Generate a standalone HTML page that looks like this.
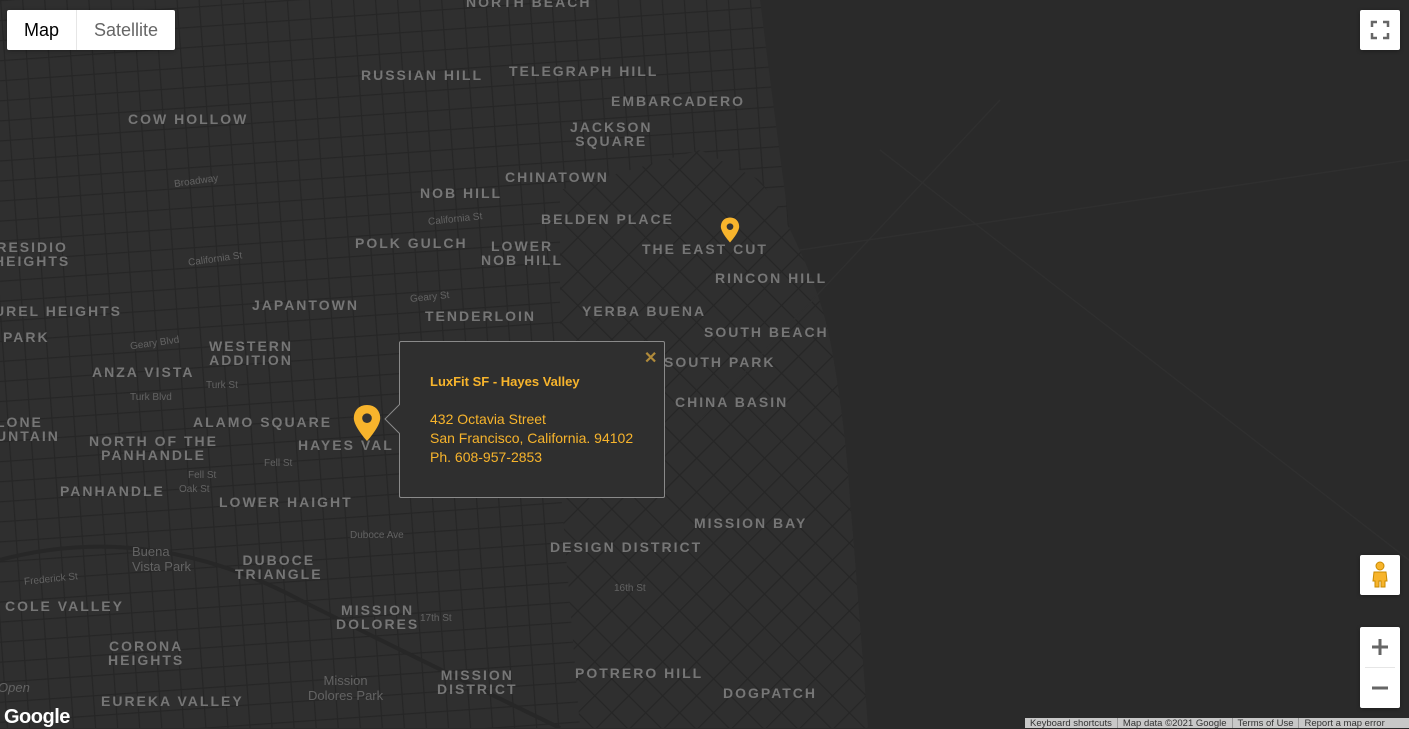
<!DOCTYPE html>
<html><head><meta charset="utf-8"><style>
*{margin:0;padding:0;box-sizing:border-box}
body{width:1409px;height:728px;overflow:hidden;background:#2a2a2a;font-family:"Liberation Sans",sans-serif;position:relative}
.l{position:absolute;color:#767676;font-weight:bold;font-size:14px;letter-spacing:2px;line-height:14px;text-align:center;white-space:nowrap}
.s{position:absolute;color:#636363;font-size:10px;white-space:nowrap}
.btn{position:absolute;background:#fff;border-radius:2px;box-shadow:0 1px 4px rgba(0,0,0,.3)}
</style></head><body>
<svg width="1409" height="728" style="position:absolute;left:0;top:0">
<defs>
<pattern id="g" width="22" height="20" patternUnits="userSpaceOnUse" patternTransform="rotate(-4)">
<rect width="22" height="20" fill="#2f2f2f"/>
<path d="M0 0H22M0 0V20" stroke="#262626" stroke-width="2.5"/>
</pattern>
<pattern id="g2" width="24" height="24" patternUnits="userSpaceOnUse" patternTransform="rotate(-45)">
<rect width="24" height="24" fill="#2f2f2f"/>
<path d="M0 0H24M0 0V24" stroke="#262626" stroke-width="2.5"/>
</pattern>
</defs>
<path d="M0 0H760Q775 120 790 230Q820 290 830 340Q845 420 850 500Q860 620 868 728H0Z" fill="url(#g)"/>
<path d="M560 190L700 150L760 180Q775 200 790 230Q820 290 830 340Q845 420 850 500Q860 620 868 728H580L560 480Z" fill="url(#g2)"/>
<path d="M0 560Q150 520 300 600Q400 650 560 728" stroke="#272727" stroke-width="4" fill="none"/>
<path d="M700 420L1000 100M800 250L1409 160M880 150L1409 560" stroke="#2f2f2f" stroke-width="1.5" fill="none"/>
</svg>
<div class="l" style="left:466px;top:-5px">NORTH BEACH</div>
<div class="l" style="left:361px;top:68px">RUSSIAN HILL</div>
<div class="l" style="left:509px;top:64px">TELEGRAPH HILL</div>
<div class="l" style="left:611px;top:94px">EMBARCADERO</div>
<div class="l" style="left:128px;top:112px">COW HOLLOW</div>
<div class="l" style="left:570px;top:120px">JACKSON<br>SQUARE</div>
<div class="l" style="left:505px;top:170px">CHINATOWN</div>
<div class="l" style="left:420px;top:186px">NOB HILL</div>
<div class="l" style="left:541px;top:212px">BELDEN PLACE</div>
<div class="l" style="left:-6px;top:240px">RESIDIO<br>HEIGHTS</div>
<div class="l" style="left:355px;top:236px">POLK GULCH</div>
<div class="l" style="left:481px;top:239px">LOWER<br>NOB HILL</div>
<div class="l" style="left:642px;top:242px">THE EAST CUT</div>
<div class="l" style="left:715px;top:271px">RINCON HILL</div>
<div class="l" style="left:252px;top:298px">JAPANTOWN</div>
<div class="l" style="left:-6px;top:304px">UREL HEIGHTS</div>
<div class="l" style="left:425px;top:309px">TENDERLOIN</div>
<div class="l" style="left:582px;top:304px">YERBA BUENA</div>
<div class="l" style="left:3px;top:330px">PARK</div>
<div class="l" style="left:704px;top:325px">SOUTH BEACH</div>
<div class="l" style="left:209px;top:339px">WESTERN<br>ADDITION</div>
<div class="l" style="left:664px;top:355px">SOUTH PARK</div>
<div class="l" style="left:92px;top:365px">ANZA VISTA</div>
<div class="l" style="left:675px;top:395px">CHINA BASIN</div>
<div class="l" style="left:193px;top:415px">ALAMO SQUARE</div>
<div class="l" style="left:-4px;top:415px;text-align:left">LONE<br>UNTAIN</div>
<div class="l" style="left:89px;top:434px">NORTH OF THE<br>PANHANDLE</div>
<div class="l" style="left:298px;top:438px">HAYES VAL</div>
<div class="l" style="left:60px;top:484px">PANHANDLE</div>
<div class="l" style="left:219px;top:495px">LOWER HAIGHT</div>
<div class="l" style="left:694px;top:516px">MISSION BAY</div>
<div class="l" style="left:550px;top:540px">DESIGN DISTRICT</div>
<div class="l" style="left:235px;top:553px">DUBOCE<br>TRIANGLE</div>
<div class="l" style="left:5px;top:599px">COLE VALLEY</div>
<div class="l" style="left:336px;top:603px">MISSION<br>DOLORES</div>
<div class="l" style="left:108px;top:639px">CORONA<br>HEIGHTS</div>
<div class="l" style="left:437px;top:668px">MISSION<br>DISTRICT</div>
<div class="l" style="left:575px;top:666px">POTRERO HILL</div>
<div class="l" style="left:723px;top:686px">DOGPATCH</div>
<div class="l" style="left:101px;top:694px">EUREKA VALLEY</div>
<div class="s" style="left:174px;top:176px;transform:rotate(-8deg)">Broadway</div>
<div class="s" style="left:188px;top:254px;transform:rotate(-8deg)">California St</div>
<div class="s" style="left:428px;top:214px;transform:rotate(-6deg)">California St</div>
<div class="s" style="left:410px;top:292px;transform:rotate(-6deg)">Geary St</div>
<div class="s" style="left:130px;top:338px;transform:rotate(-8deg)">Geary Blvd</div>
<div class="s" style="left:206px;top:380px">Turk St</div>
<div class="s" style="left:130px;top:392px">Turk Blvd</div>
<div class="s" style="left:264px;top:458px">Fell St</div>
<div class="s" style="left:188px;top:470px">Fell St</div>
<div class="s" style="left:179px;top:484px">Oak St</div>
<div class="s" style="left:350px;top:530px">Duboce Ave</div>
<div class="s" style="left:132px;top:544px;font-size:13px">Buena<br>Vista Park</div>
<div class="s" style="left:24px;top:574px;transform:rotate(-6deg)">Frederick St</div>
<div class="s" style="left:420px;top:613px">17th St</div>
<div class="s" style="left:614px;top:583px">16th St</div>
<div class="s" style="left:308px;top:673px;font-size:13px;text-align:center">Mission<br>Dolores Park</div>
<div class="s" style="left:-2px;top:680px;font-size:13px;font-style:italic">Open</div>
<svg width="30" height="36" viewBox="0 0 24 30" style="position:absolute;left:352px;top:405px"><path d="M12 0C5 0 1 5 1 11C1 18 12 30 12 30S23 18 23 11C23 5 19 0 12 0Z" fill="#f7b42c"/><circle cx="12" cy="11" r="4" fill="#333"/></svg>
<svg width="20" height="26" viewBox="0 0 24 30" style="position:absolute;left:720px;top:217px"><path d="M12 0C5 0 1 5 1 11C1 18 12 30 12 30S23 18 23 11C23 5 19 0 12 0Z" fill="#f7b42c"/><circle cx="12" cy="11" r="4" fill="#333"/></svg>
<div style="position:absolute;left:399px;top:341px;width:266px;height:157px;background:#2f2f2f;border:1px solid #8a8a8a;border-radius:2px"></div>
<svg width="20" height="32" style="position:absolute;left:384px;top:404px"><path d="M16 0L1 15L16 30" fill="#2f2f2f" stroke="#8a8a8a"/><rect x="16" y="0" width="4" height="32" fill="#2f2f2f"/></svg>
<div style="position:absolute;left:644px;top:348px;color:#b08a3a;font-size:16px;font-weight:bold">✕</div>
<div style="position:absolute;left:430px;top:372px;color:#f7b42c;font-size:14px;line-height:19px">
<b style="font-size:13px">LuxFit SF - Hayes Valley</b><br><br>432 Octavia Street<br>San Francisco, California. 94102<br>Ph. 608-957-2853</div>
<div class="btn" style="left:7px;top:10px;width:168px;height:40px;display:flex;font-size:18px;line-height:40px">
<div style="width:70px;text-align:center;color:#000;border-right:1px solid #e6e6e6">Map</div>
<div style="flex:1;text-align:center;color:#666">Satellite</div></div>
<div class="btn" style="left:1360px;top:10px;width:40px;height:40px">
<svg width="40" height="40"><path d="M12 17V12H17M23 12H28V17M28 23V28H23M17 28H12V23" stroke="#666" stroke-width="2.5" fill="none"/></svg></div>
<div class="btn" style="left:1360px;top:555px;width:40px;height:40px">
<svg width="40" height="40"><circle cx="20" cy="11" r="4" fill="#f7b42c" stroke="#c98a00"/><path d="M14 17H26L27 26H25V32H21V26H19V32H15V26H13Z" fill="#f7b42c" stroke="#c98a00"/></svg></div>
<div class="btn" style="left:1360px;top:627px;width:40px;height:81px">
<svg width="40" height="81"><path d="M12 20H28M20 12V28" stroke="#666" stroke-width="3"/><path d="M5 40.5H35" stroke="#e6e6e6"/><path d="M12 61H28" stroke="#666" stroke-width="3"/></svg></div>
<div style="position:absolute;left:4px;top:706px;color:#fff;font-size:20px;font-weight:bold;letter-spacing:-0.5px">Google</div>
<div style="position:absolute;left:1025px;top:718px;width:384px;height:10px;background:#c8c8c8;display:flex;font-size:9.5px;line-height:12px;color:#333;overflow:hidden;white-space:nowrap">
<span style="padding:0 5px;border-right:1px solid #999">Keyboard shortcuts</span><span style="padding:0 5px;border-right:1px solid #999">Map data ©2021 Google</span><span style="padding:0 5px;border-right:1px solid #999">Terms of Use</span><span style="padding:0 5px">Report a map error</span></div>
</body></html>
